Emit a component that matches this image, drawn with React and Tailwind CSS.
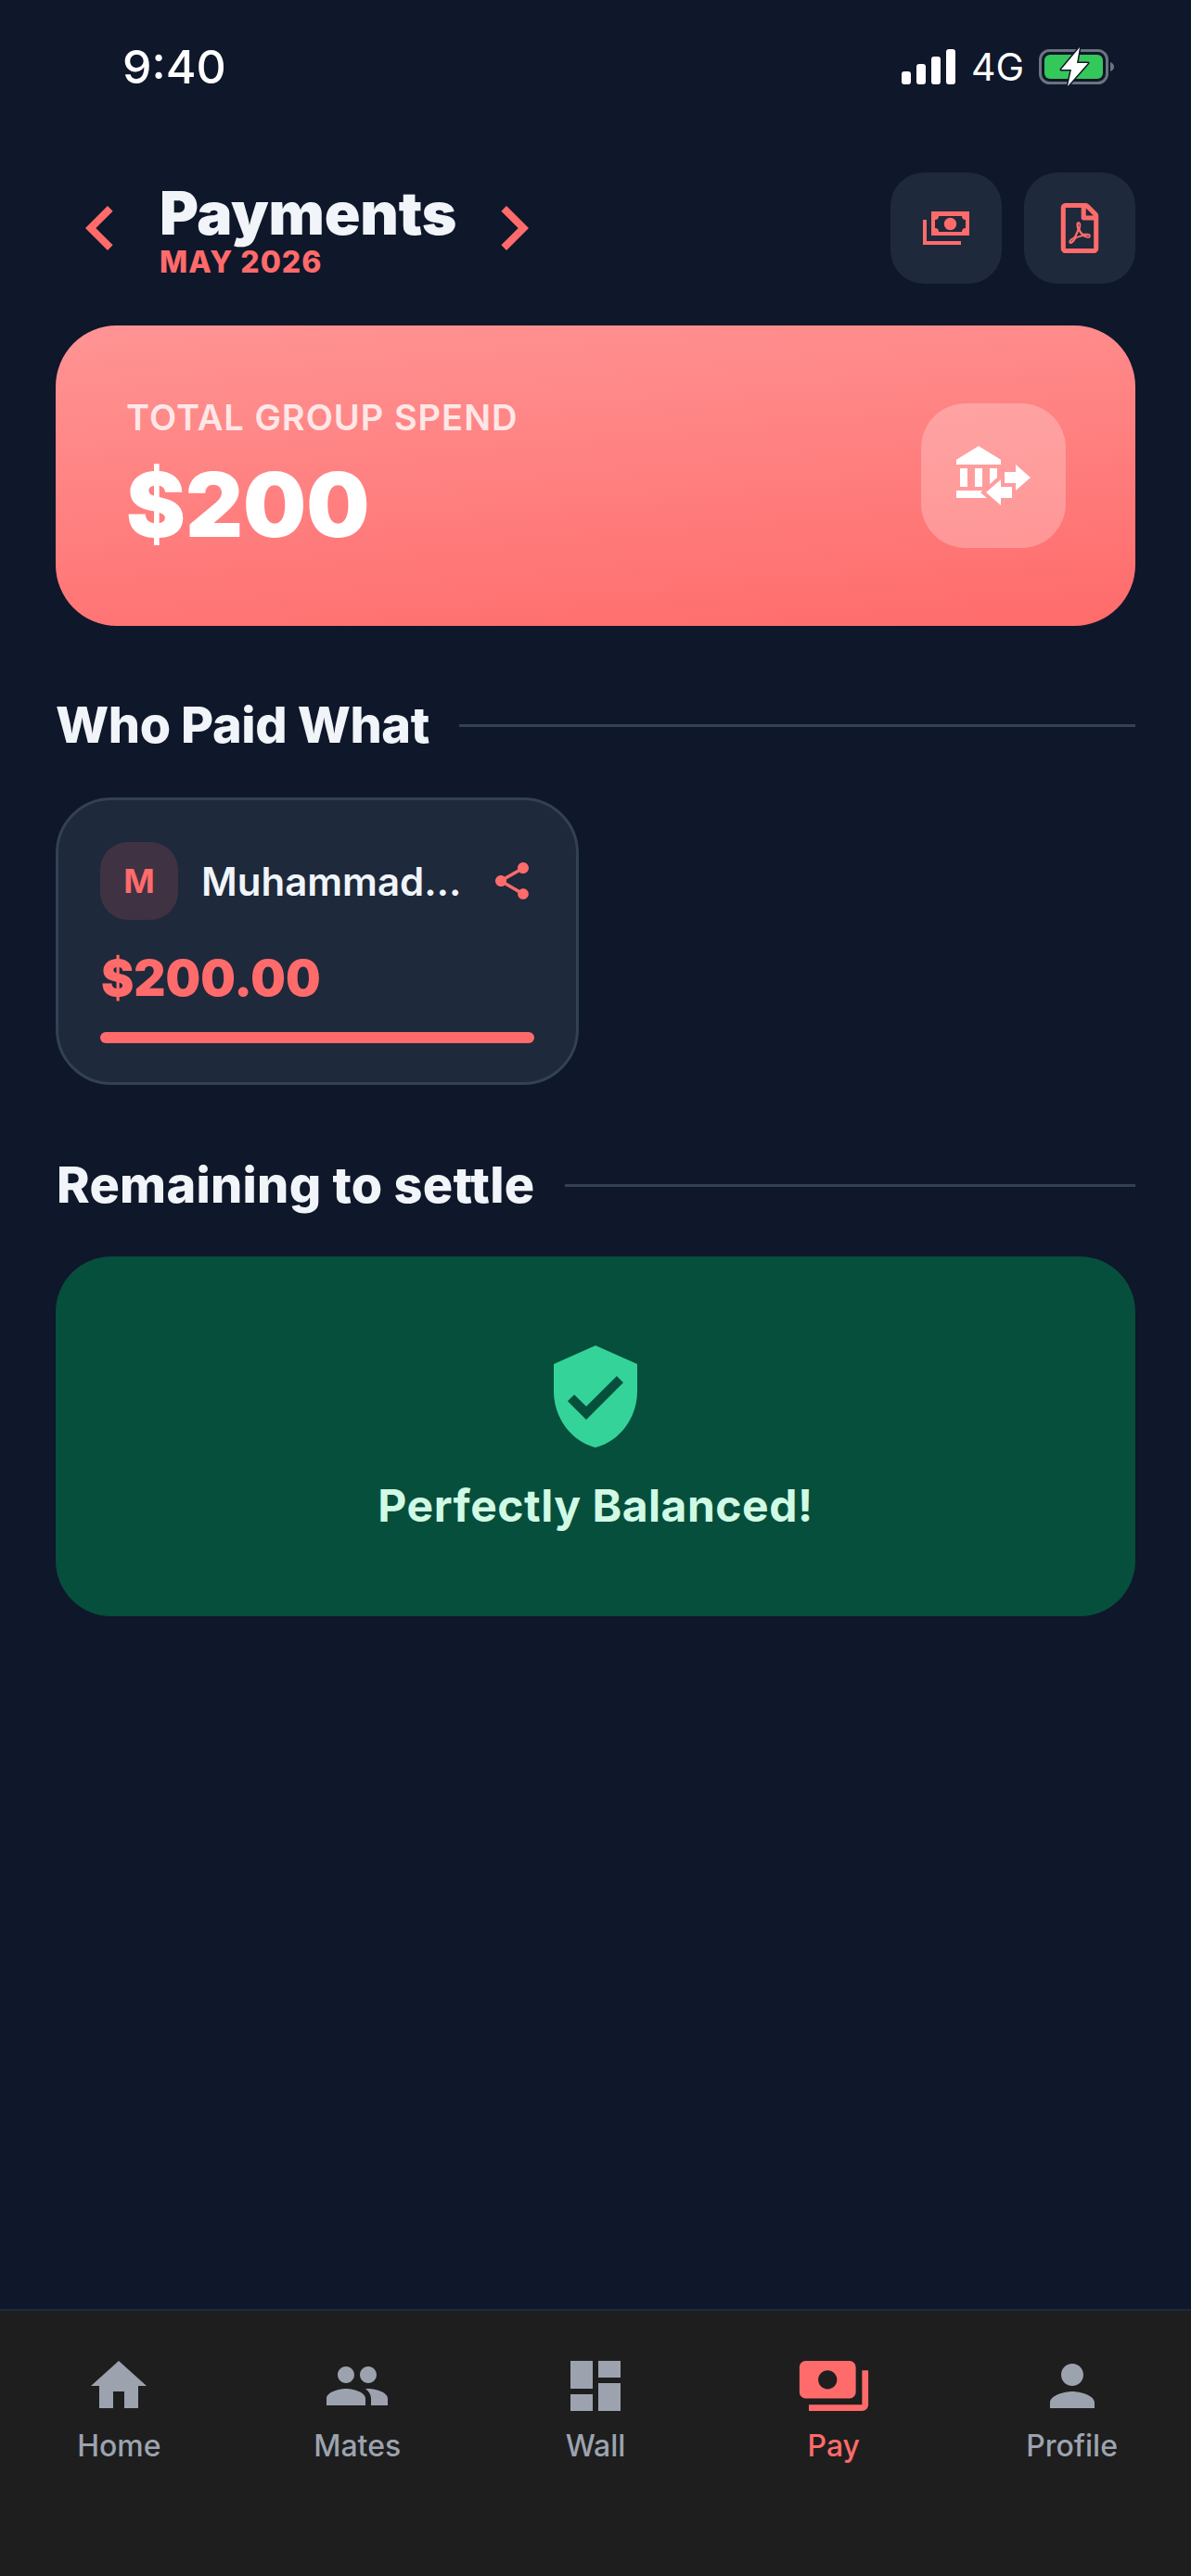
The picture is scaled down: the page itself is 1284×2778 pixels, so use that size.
import React from "react";
import { FaRegFilePdf } from "react-icons/fa";
import {
  MdChevronLeft,
  MdChevronRight,
  MdDashboard,
  MdHome,
  MdPayments,
  MdPeople,
  MdPerson,
  MdShare,
  MdVerifiedUser,
} from "react-icons/md";

const navItems = [
  { label: "Home", Icon: MdHome },
  { label: "Mates", Icon: MdPeople },
  { label: "Wall", Icon: MdDashboard },
  { label: "Pay", Icon: MdPayments, active: true },
  { label: "Profile", Icon: MdPerson },
];

function StatusBar() {
  return (
    <div className="flex h-[72px] items-center justify-between pl-[132px] pr-[82px] pt-0 text-white">
      <span className="font-['Inter',sans-serif] text-[50px] leading-none font-medium">9:40</span>
      <div className="flex items-center gap-[14px]">
        <svg width="58" height="38" viewBox="0 0 58 38" fill="#fff" className="mr-[3px]">
          <rect x="0" y="24" width="10" height="14" rx="3" />
          <rect x="16" y="16" width="10" height="22" rx="3" />
          <rect x="32" y="8" width="10" height="30" rx="3" />
          <rect x="48" y="0" width="10" height="38" rx="3" />
        </svg>
        <span className="font-['Inter',sans-serif] text-[41px] leading-none">4G</span>
        <svg width="82" height="42" viewBox="0 0 82 42" className="ml-[2px]">
          <rect x="1.5" y="3.5" width="72" height="35" rx="10" fill="none" stroke="#6b7280" strokeWidth="3" />
          <rect x="6" y="8" width="63" height="26" rx="6" fill="#34c759" />
          <path d="M77 16c3 1 4 3 4 5s-1 4-4 5z" fill="#6b7280" />
          <path d="M44 0 L24 24 H35 L31 42 L53 17 H41 Z" fill="#fff" stroke="#0f172a" strokeWidth="3" strokeLinejoin="round" paintOrder="stroke" />
        </svg>
      </div>
    </div>
  );
}

function MoneyIcon() {
  return (
    <svg width="50" height="36" viewBox="0 0 50 36" fill="#ff6b6b" fillRule="evenodd">
      <path d="M9 0H50V26H9ZM17 5H42Q42 9 46 9V18Q42 18 42 22H17Q17 18 13 18V9Q17 9 17 5Z" />
      <circle cx="29.5" cy="13.5" r="6.7" />
      <path d="M0 9H4V32H41V36H0Z" />
    </svg>
  );
}

function BankTransferIcon() {
  return (
    <svg width="96" height="96" viewBox="0 0 24 24" fill="#fff">
      <path d="M15,14V11H18V9L22,12.5L18,16V14H15M14,7.7V9H2V7.7L8,4L14,7.7M7,10H9V15H7V10M3,10H5V15H3V10M13,10V12.5L11,14.3V10H13M9.1,16L8.5,16.5L10.2,18H2V16H9.1M17,15V18H14V20L10,16.5L14,13V15H17Z" />
    </svg>
  );
}

function SectionTitle({ children, className }) {
  return (
    <div className="flex items-center gap-[32px]">
      <h2 className={`text-[54px] leading-none font-extrabold text-[#f1f5f9] whitespace-nowrap ${className}`}>{children}</h2>
      <div className="h-[3px] flex-1 bg-[#334155]" />
    </div>
  );
}

function Header() {
  return (
    <div className="flex items-center justify-between pt-[78px]">
      <div className="flex items-center">
        <MdChevronLeft className="text-[#ff6b6b]" size={96} />
        <div className="ml-[16px] flex flex-col pt-[7px]">
          <span className="text-[64px] leading-[64px] font-black tracking-[-0.2px] text-[#f1f5f9]">Payments</span>
          <span className="mt-[3px] text-[32px] leading-[36px] font-extrabold tracking-[1px] text-[#ff6b6b]">MAY 2026</span>
        </div>
        <MdChevronRight className="ml-[14px] text-[#ff6b6b]" size={96} />
      </div>
      <div className="flex gap-[24px]">
        <button className="flex h-[120px] w-[120px] items-center justify-center rounded-[36px] bg-[#1e293b]">
          <MoneyIcon />
        </button>
        <button className="flex h-[120px] w-[120px] items-center justify-center rounded-[36px] bg-[#1e293b]">
          <FaRegFilePdf className="text-[#ff6b6b]" size={54} />
        </button>
      </div>
    </div>
  );
}

function TotalCard() {
  return (
    <div className="mt-[45px] flex h-[324px] items-center justify-between rounded-[66px] bg-[linear-gradient(175deg,#ff9494,#ff6b6b)] pl-[76px] pr-[75px]">
      <div className="flex flex-col pb-[3px]">
        <span className="text-[38px] leading-[46px] font-semibold tracking-[1px] text-white/80">TOTAL GROUP SPEND</span>
        <span className="mt-[19px] text-[96px] leading-[104px] font-black text-white">$200</span>
      </div>
      <div className="flex h-[156px] w-[156px] items-center justify-center rounded-[48px] bg-white/25">
        <BankTransferIcon />
      </div>
    </div>
  );
}

function PayerCard() {
  return (
    <div className="mt-[51px] flex h-[310px] w-[564px] flex-col rounded-[60px] border-[3px] border-[#334155] bg-[#1e293b] px-[45px] pt-[45px]">
      <div className="flex items-center">
        <div className="flex h-[84px] w-[84px] shrink-0 items-center justify-center rounded-[30px] bg-[#ff6b6b]/15 text-[36px] font-bold text-[#ff6b6b]">
          M
        </div>
        <span className="ml-[25px] min-w-0 flex-1 truncate text-[42px] font-semibold text-[#f1f5f9]">Muhammad…</span>
        <MdShare className="shrink-0 text-[#ff6b6b]" size={48} />
      </div>
      <span className="mt-[30px] pl-[1px] text-[53px] leading-[66px] font-black text-[#ff6b6b]">$200.00</span>
      <div className="mt-[25px] h-[12px] rounded-[6px] bg-[#ff6b6b]" />
    </div>
  );
}

function BalancedCard() {
  return (
    <div className="mt-[50px] flex h-[388px] flex-col items-center justify-center rounded-[60px] bg-[#064f3c]">
      <MdVerifiedUser className="text-[#34d399]" size={120} />
      <span className="mt-[30px] text-[48px] leading-[56px] font-bold tracking-[0.5px] text-[#d1fae5]">Perfectly Balanced!</span>
    </div>
  );
}

function BottomNav() {
  return (
    <nav className="grid h-[288px] grid-cols-5 border-t-[2px] border-[#1e293b] bg-[#1e1e1e] pt-[45px]">
      {navItems.map(({ label, Icon, active }) => (
        <div key={label} className={`flex flex-col items-center ${active ? "text-[#ff6b6b]" : "text-[#9ca3af]"}`}>
          <Icon size={72} className={active ? "scale-[1.125]" : ""} />
          <span className="mt-[7px] text-[32px] leading-[44px] font-medium">{label}</span>
        </div>
      ))}
    </nav>
  );
}

export default function App() {
  return (
    <div className="flex h-[2778px] w-[1284px] flex-col bg-[#0f172a] font-['Inter',sans-serif]">
      <div className="flex-1 pt-[36px]">
        <StatusBar />
        <div className="px-[60px]">
          <Header />
          <TotalCard />
          <div className="mt-[80px]">
            <SectionTitle className="tracking-[-0.4px]">Who Paid What</SectionTitle>
          </div>
          <PayerCard />
          <div className="mt-[81px]">
            <SectionTitle className="ml-[1px] tracking-[0.25px]">Remaining to settle</SectionTitle>
          </div>
          <BalancedCard />
        </div>
      </div>
      <BottomNav />
    </div>
  );
}
